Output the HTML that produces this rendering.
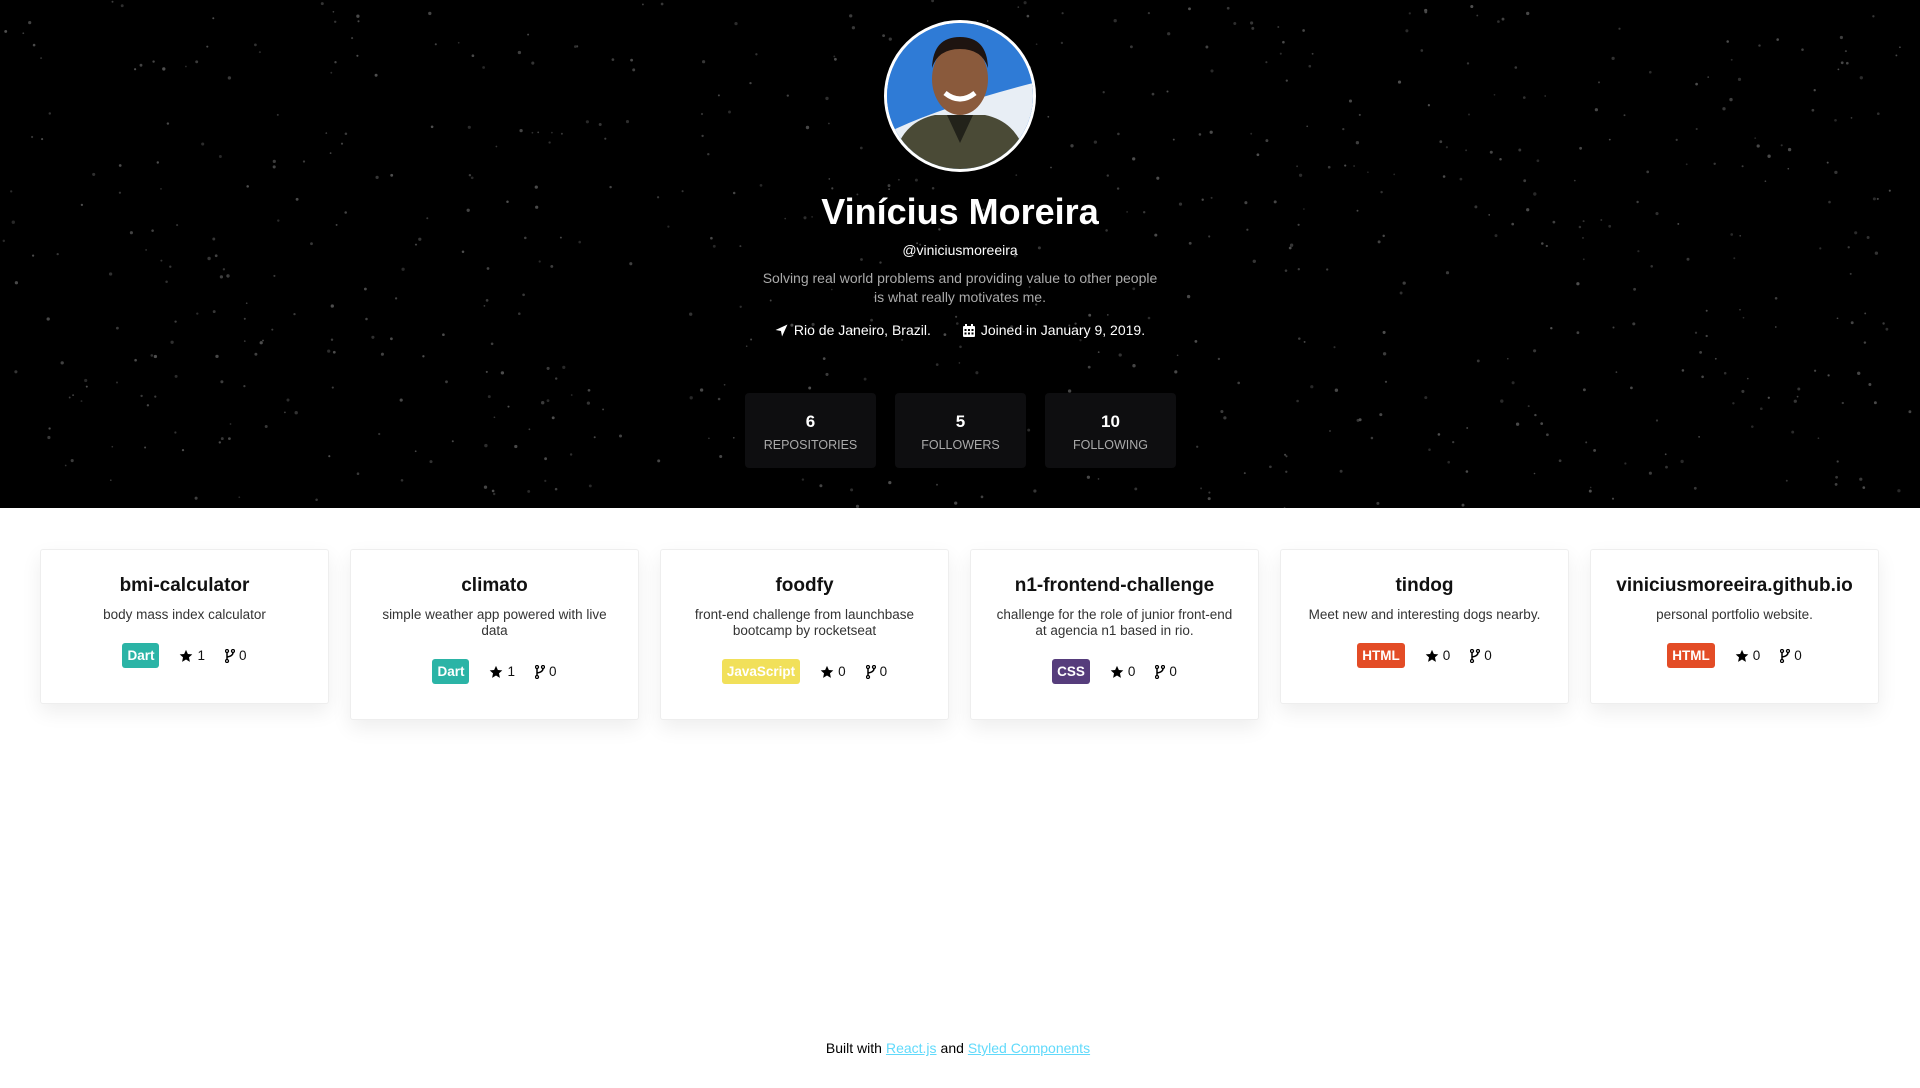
<!DOCTYPE html>
<html><head><meta charset="utf-8">
<style>
*{margin:0;padding:0;box-sizing:border-box}
html,body{width:1920px;height:1088px;background:#fff;font-family:"Liberation Sans",Arial,sans-serif;overflow:hidden}
.hero{position:absolute;left:0;top:0;width:1920px;height:508px;background:#000;overflow:hidden}
.stars{position:absolute;left:0;top:0}
.avatar{position:absolute;left:884px;top:20px;width:152px;height:152px;border-radius:50%;border:3px solid #fff;overflow:hidden;background:#3a7fd0}
.name{position:absolute;left:0;width:1920px;top:191px;text-align:center;color:#fff;font-size:36px;font-weight:bold}
.handle{position:absolute;left:0;width:1920px;top:242px;text-align:center;color:#fff;font-size:14px}
.bio{position:absolute;left:0;width:1920px;top:269px;text-align:center;color:#aaa;font-size:14px;line-height:19px}
.meta{position:absolute;left:0;width:1920px;top:322px;text-align:center;color:#fff;font-size:14px}
.meta span{display:inline-flex;align-items:center;gap:6px;margin:0 16px}
.stat{position:absolute;top:393px;width:131px;height:75px;background:#0e0e10;border-radius:4px;text-align:center;color:#fff}
.stat b{display:block;font-size:17px;margin-top:19px}
.stat i{display:block;font-style:normal;font-size:12.5px;color:#aaa;margin-top:6px}
.card{position:absolute;top:549px;width:289px;background:#fff;border:1px solid #eee;border-radius:3px;box-shadow:0 8px 20px rgba(0,0,0,0.07);text-align:center}
.card h3{font-size:19px;margin-top:25px;color:#111}
.card p{font-size:13.5px;color:#333;margin:10px 24px 0;line-height:16px}
.row{display:flex;justify-content:center;align-items:center;margin-top:20px;font-size:13.5px;color:#111}
.badge{color:#fff;font-weight:bold;font-size:13.5px;padding:5px 5px;border-radius:3px;margin-right:20px}
.st{display:inline-flex;align-items:center;gap:4px;margin-right:20px}
.fk{display:inline-flex;align-items:center;gap:4px}
.foot{position:absolute;left:0;width:1920px;top:1040px;text-align:center;font-size:14px;color:#000}
.foot a{color:#61dafb;margin:0 4px}
</style></head><body>
<div class="hero">
<svg class="stars" id="stars" width="1920" height="508"></svg>
<script>
(function(){var s=12345;function r(){s=(s*1103515245+12345)%2147483648;return s/2147483648;}
var g='';for(var i=0;i<700;i++){var x=(r()*1920).toFixed(1),y=(r()*508).toFixed(1),rad=(0.8+r()*0.9).toFixed(2),c=40+Math.floor(r()*40);g+='<circle cx="'+x+'" cy="'+y+'" r="'+rad+'" fill="rgb('+c+','+c+','+c+')"/>';}
document.getElementById('stars').innerHTML=g;})();
</script>
<div class="avatar"><svg width="146" height="146" viewBox="0 0 146 146">
<rect width="146" height="146" fill="#2f7bd6"/>
<path d="M0 110 Q50 85 146 60 L146 146 L0 146Z" fill="#e8eef5"/>
<path d="M5 146 Q10 100 48 92 L98 92 Q136 100 141 146Z" fill="#4a4a36"/>
<path d="M60 92 L73 120 L86 92Z" fill="#22221a"/>
<ellipse cx="73" cy="56" rx="28" ry="36" fill="#8a5a3c"/>
<path d="M45 45 Q46 14 73 14 Q100 14 101 45 Q95 26 73 26 Q51 26 45 45Z" fill="#1e1410"/>
<path d="M58 70 Q73 82 88 70" stroke="#fff" stroke-width="5" fill="none"/>
</svg></div>
<div class="name">Vinícius Moreira</div>
<div class="handle">@viniciusmoreeira</div>
<div class="bio">Solving real world problems and providing value to other people<br>is what really motivates me.</div>
<div class="meta"><span><svg width="13" height="13" viewBox="0 0 12 12"><path d="M11.5 0.5 L0.5 5.5 L5.5 6.5 L6.5 11.5Z" fill="#fff"/></svg>Rio de Janeiro, Brazil.</span><span><svg width="12" height="13" viewBox="0 0 12 13"><rect x="0" y="2" width="12" height="11" rx="1" fill="#fff"/><rect x="2" y="0" width="2" height="3" fill="#fff"/><rect x="8" y="0" width="2" height="3" fill="#fff"/><g fill="#000"><rect x="1.5" y="5" width="2" height="2"/><rect x="5" y="5" width="2" height="2"/><rect x="8.5" y="5" width="2" height="2"/><rect x="1.5" y="8.5" width="2" height="2"/><rect x="5" y="8.5" width="2" height="2"/><rect x="8.5" y="8.5" width="2" height="2"/></g></svg>Joined in January 9, 2019.</span></div>
<div class="stat" style="left:745px"><b>6</b><i>REPOSITORIES</i></div>
<div class="stat" style="left:895px"><b>5</b><i>FOLLOWERS</i></div>
<div class="stat" style="left:1045px"><b>10</b><i>FOLLOWING</i></div>
</div>

<svg width="0" height="0" style="position:absolute"><defs>
<symbol id="star" viewBox="0 0 24 24"><path d="M12 1.5l3.2 7 7.6.8-5.7 5.1 1.6 7.6L12 18.1 5.3 22l1.6-7.6L1.2 9.3l7.6-.8z" fill="#000"/></symbol>
<symbol id="fork" viewBox="0 0 10 14"><circle cx="2" cy="2" r="1.5" fill="none" stroke="#000" stroke-width="1.3"/><circle cx="8" cy="2" r="1.5" fill="none" stroke="#000" stroke-width="1.3"/><circle cx="2" cy="12" r="1.5" fill="none" stroke="#000" stroke-width="1.3"/><path d="M2 3.5V10.5 M8 3.5 Q8 7 2 8" fill="none" stroke="#000" stroke-width="1.5"/></symbol>
</defs></svg>

<div class="card" style="left:40px;height:155px"><h3>bmi-calculator</h3><p>body mass index calculator</p><div class="row"><span class="badge" style="background:#2bb4a6">Dart</span><span class="st"><svg width="14" height="14"><use href="#star"/></svg>1</span><span class="fk"><svg width="10" height="14"><use href="#fork"/></svg>0</span></div></div>
<div class="card" style="left:350px;height:171px"><h3>climato</h3><p>simple weather app powered with live data</p><div class="row"><span class="badge" style="background:#2bb4a6">Dart</span><span class="st"><svg width="14" height="14"><use href="#star"/></svg>1</span><span class="fk"><svg width="10" height="14"><use href="#fork"/></svg>0</span></div></div>
<div class="card" style="left:660px;height:171px"><h3>foodfy</h3><p>front-end challenge from launchbase bootcamp by rocketseat</p><div class="row"><span class="badge" style="background:#f1e05a">JavaScript</span><span class="st"><svg width="14" height="14"><use href="#star"/></svg>0</span><span class="fk"><svg width="10" height="14"><use href="#fork"/></svg>0</span></div></div>
<div class="card" style="left:970px;height:171px"><h3>n1-frontend-challenge</h3><p>challenge for the role of junior front-end at agencia n1 based in rio.</p><div class="row"><span class="badge" style="background:#563d7c">CSS</span><span class="st"><svg width="14" height="14"><use href="#star"/></svg>0</span><span class="fk"><svg width="10" height="14"><use href="#fork"/></svg>0</span></div></div>
<div class="card" style="left:1280px;height:155px"><h3>tindog</h3><p>Meet new and interesting dogs nearby.</p><div class="row"><span class="badge" style="background:#e34c26">HTML</span><span class="st"><svg width="14" height="14"><use href="#star"/></svg>0</span><span class="fk"><svg width="10" height="14"><use href="#fork"/></svg>0</span></div></div>
<div class="card" style="left:1590px;height:155px"><h3>viniciusmoreeira.github.io</h3><p>personal portfolio website.</p><div class="row"><span class="badge" style="background:#e34c26">HTML</span><span class="st"><svg width="14" height="14"><use href="#star"/></svg>0</span><span class="fk"><svg width="10" height="14"><use href="#fork"/></svg>0</span></div></div>

<div class="foot">Built with<a href="#">React.js</a>and<a href="#">Styled Components</a></div>
</body></html>
